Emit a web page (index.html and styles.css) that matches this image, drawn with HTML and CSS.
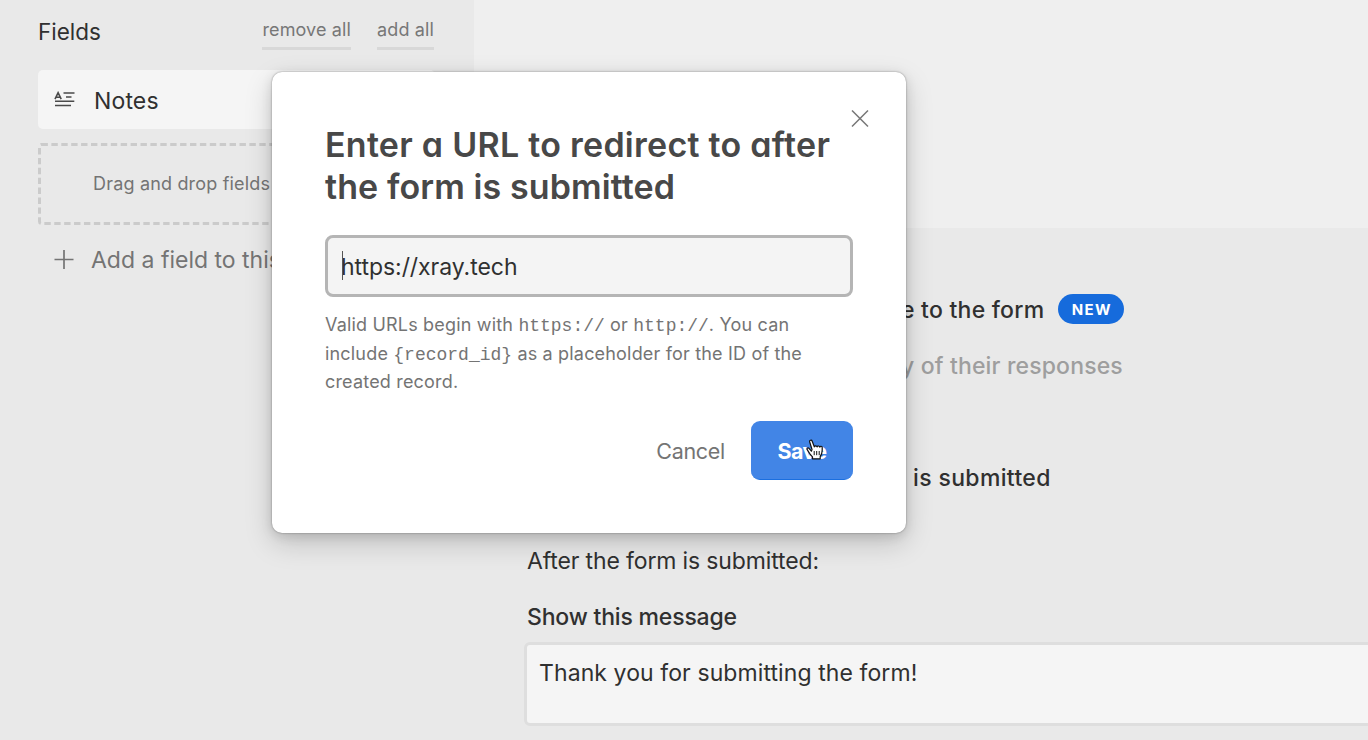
FILE: index.html
```html
<!DOCTYPE html>
<html lang="en">
<head>
<meta charset="utf-8">
<title>Form settings</title>
<link rel="stylesheet" href="styles.css">
</head>
<body>
<div class="app">
  <aside class="sidebar">
    <header class="fields-header">
      <span class="fields-title">Fields</span>
      <nav class="fields-actions"><a class="link remove">remove all</a><a class="link add">add all</a></nav>
    </header>
    <div class="field-card">
      <svg class="field-icon" width="22" height="18" viewBox="0 0 22 18" fill="none" stroke="#4a4a4a" stroke-width="1.6"><path d="M1 8.2 4.1 1.7 7.2 8.2M2.2 6.2H6M9.5 2H20.5M12 6H17.5M1 10.3H20.3M1 14.5H17"/></svg>
      <span class="field-name">Notes</span>
    </div>
    <div class="drop-zone">
      <svg class="drop-outline" width="397" height="82" fill="none" stroke="#cbcbcb" stroke-width="3"><rect x="1.5" y="1.5" width="394" height="79" rx="2" stroke-dasharray="6.4 3.5"/></svg>
      <span class="drop-text">Drag and drop fields here</span>
    </div>
    <div class="add-field">
      <svg width="20" height="20" viewBox="0 0 20 20" stroke="#747474" stroke-width="1.7"><path d="M.5 9.5h19M10 0v19"/></svg>
      <span class="add-text">Add a field to this table</span>
    </div>
  </aside>
  <main class="main">
    <div class="band"></div>
    <section class="settings">
      <div class="row row-new"><span class="t-new">e to the form</span><span class="badge">NEW</span></div>
      <div class="row row-copy"><span class="t-copy">y of their responses</span></div>
      <div class="row row-submitted"><span class="t-submitted">is submitted</span></div>
      <div class="row row-after"><span class="t-after">After the form is submitted:</span></div>
      <div class="row row-show"><span class="t-show">Show this message</span></div>
      <div class="message"><span class="t-message">Thank you for submitting the form!</span></div>
    </section>
  </main>
</div>
<div class="modal" role="dialog">
  <svg class="close" width="18" height="18" viewBox="0 0 18 18" stroke="#777" stroke-width="1.5"><path d="M1 .5l16 16M17 .5L1 16.5"/></svg>
  <h1 class="title"><span class="title-a">Enter a URL to redirect to after</span><br><span class="title-b">the form is submitted</span></h1>
  <div class="url-input"><i class="caret"></i><span class="url">https://xray.tech</span></div>
  <p class="help">Valid URLs begin with <code>https://</code> or <code>http://</code>. You can<br>include <code>{record_id}</code> as a placeholder for the ID of the<br>created record.</p>
  <div class="buttons"><span class="cancel">Cancel</span><span class="save">Save</span></div>
  <svg class="pointer" width="18" height="21" viewBox="0 0 18 21"><path d="M5.4 12.2 3 9.4C1.9 8.2.5 9.4 1.2 10.7L4.3 15.5 6.5 17.8V19.8H14.2V17.6C15.7 15.6 16.2 13.8 16.2 11V8.4C16.2 6.9 14 6.9 13.8 8.2 13.6 6.6 11.3 6.6 11.1 8 10.8 6.5 8.6 6.6 8.3 7.8L6.2 2.2C5.6.5 3.2 1.2 3.7 3L6 10.5Z" fill="#fff" stroke="#111" stroke-width="1.2" stroke-linejoin="round"/><path d="M8.2 12v4.2M10.7 12v4.2M13.2 12v4.2" stroke="#111" stroke-width="1"/></svg>
</div>
</body>
</html>
```
FILE: styles.css
```css
* { box-sizing: border-box; }
body { margin: 0; width: 1368px; height: 740px; overflow: hidden; position: relative; background: #e9e9e9; color: #303030; font-family: Inter, "Liberation Sans", sans-serif; font-size: 23px; white-space: nowrap; }
span { white-space: nowrap; }
.app { display: flex; height: 740px; }
.sidebar { width: 474px; flex: none; padding-left: 38px; overflow: hidden; }
.fields-header { display: flex; justify-content: space-between; width: 396px; height: 70px; }
.fields-title { line-height: 64px; font-size: 22.5px; }
.fields-actions { display: flex; gap: 26px; padding-top: 16px; }
.link { height: 34px; line-height: 28px; border-bottom: 3px solid #d8d8d8; color: #777; font-size: 18px; letter-spacing: .13px; }
.field-card { display: flex; align-items: center; width: 397px; height: 59px; padding-left: 16px; gap: 18px; border-radius: 5px; background: #f5f5f5; }
.field-name { font-size: 23px; line-height: 60px; padding-top: 2px; letter-spacing: .15px; }
.drop-zone { position: relative; width: 397px; height: 82px; margin-top: 14px; padding-left: 55px; line-height: 82px; color: #747474; font-size: 18px; letter-spacing: .18px; }
.drop-outline { position: absolute; left: 0; top: 0; }
.add-field { display: flex; align-items: center; gap: 17px; height: 70px; padding-left: 16px; color: #747474; }
.main { flex: 1; min-width: 0; overflow: hidden; }
.band { height: 228px; background: #efefef; }
.settings { padding-left: 53px; }
.row { display: flex; align-items: center; height: 56px; }
.row-new { margin-top: 53px; padding-left: 374px; gap: 14px; font-weight: 500; letter-spacing: .24px; }
.t-new, .t-copy, .t-submitted, .t-after, .t-show { padding-top: 1px; }
.badge { width: 66px; height: 30px; border-radius: 15px; background: #166bdc; color: #fff; font-size: 15px; font-weight: 700; line-height: 31px; letter-spacing: 1.3px; text-align: center; padding-left: 1px; }
.row-copy { padding-left: 374px; color: #9e9e9e; font-weight: 500; letter-spacing: .16px; }
.row-submitted { margin-top: 56px; padding-left: 386px; font-weight: 500; letter-spacing: .36px; }
.row-after { margin-top: 27px; letter-spacing: -.14px; }
.row-show { font-weight: 500; letter-spacing: -.18px; }
.message { width: 900px; height: 84px; margin: -2px 0 0 -3px; padding: 0 0 0 12px; border: 3px solid #dedede; border-radius: 6px; background: #f5f5f5; line-height: 56px; letter-spacing: .09px; }
.modal { position: absolute; left: 272px; top: 72px; width: 634px; height: 461px; padding: 52px 53px; border-radius: 10px; background: #fff; box-shadow: 0 0 2px rgba(0,0,0,.4), 0 10px 28px rgba(0,0,0,.18), 0 3px 12px rgba(0,0,0,.12); }
.close { position: absolute; left: 579px; top: 38px; }
.title { margin: 0; color: #484848; font-size: 34px; font-weight: 600; line-height: 42px; font-feature-settings: "cv11"; }
.title-a { letter-spacing: .27px; }
.title-b { letter-spacing: .1px; }
.url-input { position: relative; height: 62px; margin-top: 27px; padding-left: 13px; border: 3px solid #b5b5b5; border-radius: 8px; background: #f4f4f4; line-height: 58px; }
.caret { position: absolute; left: 14px; top: 13px; width: 1px; height: 29px; background: #555; }
.url { letter-spacing: -.05px; }
.help { margin: 14px 0 0; color: #747474; font-size: 18px; line-height: 28.5px; letter-spacing: .18px; }
.help code { font-family: "Liberation Mono", monospace; font-size: 18px; line-height: 1; letter-spacing: 0; }
.buttons { display: flex; justify-content: flex-end; align-items: center; gap: 26px; margin-top: 24px; }
.cancel { color: #747474; font-size: 21.5px; letter-spacing: -.3px; padding-top: 1px; }
.save { width: 102px; height: 59px; border-radius: 9px; background: #4285e6; border-bottom: 1px solid #1b6fe0; color: #fff; font-size: 21.5px; font-weight: 700; line-height: 60px; letter-spacing: -.6px; text-align: center; }
.pointer { position: absolute; left: 534px; top: 367px; }
```
